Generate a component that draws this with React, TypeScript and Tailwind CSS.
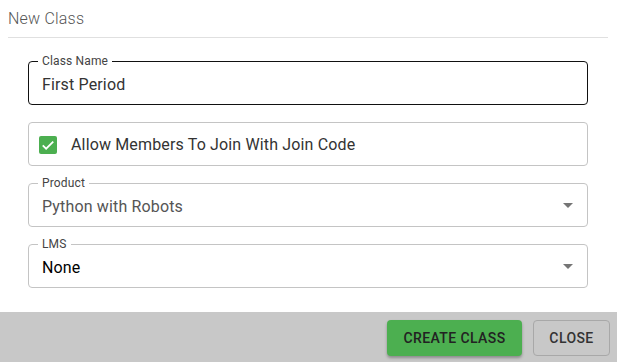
import { ReactNode } from 'react';

function Outlined({ label, focused, children }: { label?: string; focused?: boolean; children: ReactNode }) {
  return (
    <div
      className={`relative h-[44px] w-[560px] rounded-[4px] border flex items-center pl-[13px] pr-[14px] pt-[3px] ${
        focused ? 'border-[#111] border-[1.5px]' : 'border-[#c4c4c4]'
      }`}
    >
      {label && (
        <span className="absolute left-[9px] top-[-8px] bg-white px-[4px] text-[12px] leading-[14px] text-[#444]">
          {label}
        </span>
      )}
      {children}
    </div>
  );
}

function Caret() {
  return (
    <svg width="10" height="5" viewBox="0 0 10 5" className="ml-auto mb-[3px]">
      <path d="M0 0h10L5 5z" fill="#757575" />
    </svg>
  );
}

export default function App() {
  return (
    <div className="w-[617px] h-[362px] bg-white flex flex-col font-['Roboto',sans-serif]">
      {/* Header */}
      <div className="mx-2 w-[600px] pt-[7px] pb-[6px] border-b border-[#e0e0e0]">
        <h2 className="text-[16px] leading-[24px] font-light tracking-[0.2px] text-[#555]">New Class</h2>
      </div>

      {/* Fields */}
      <div className="flex flex-col gap-[17px] pl-[28px] pt-[23px] tracking-[0.15px]">
        <Outlined label="Class Name" focused>
          <span className="text-[16px] text-[#333]">First Period</span>
        </Outlined>

        <div className="relative h-[44px] w-[560px] rounded-[4px] border border-[#c4c4c4] flex items-center pl-[10px] pt-[1px]">
          <span className="w-[18px] h-[18px] rounded-[2px] bg-[#4caf50] flex items-center justify-center">
            <svg width="18" height="18" viewBox="0 0 24 24" fill="none" stroke="white" strokeWidth={2.4}>
              <path d="M5 12.5l4.5 4.5L19 7.5" />
            </svg>
          </span>
          <span className="ml-[14px] text-[16px] text-[#333]">Allow Members To Join With Join Code</span>
        </div>

        <Outlined label="Product">
          <span className="text-[16px] text-[#555]">Python with Robots</span>
          <Caret />
        </Outlined>

        <Outlined label="LMS">
          <span className="text-[16px] text-black">None</span>
          <Caret />
        </Outlined>
      </div>

      {/* Footer */}
      <div className="mt-auto h-[50px] bg-[#c8c8c8] flex items-start justify-end gap-[11px] pt-[8px] pr-[7px]">
        <button className="h-[36px] w-[135px] rounded-[4px] bg-[#4caf50] text-[14px] font-medium tracking-[0.4px] text-[#222] shadow-[0_2px_3px_rgba(0,0,0,0.3)]">
          CREATE CLASS
        </button>
        <button className="h-[36px] w-[77px] rounded-[4px] border border-[#a8a8a8] text-[14px] font-medium tracking-[0.4px] text-[#333]">
          CLOSE
        </button>
      </div>
    </div>
  );
}
